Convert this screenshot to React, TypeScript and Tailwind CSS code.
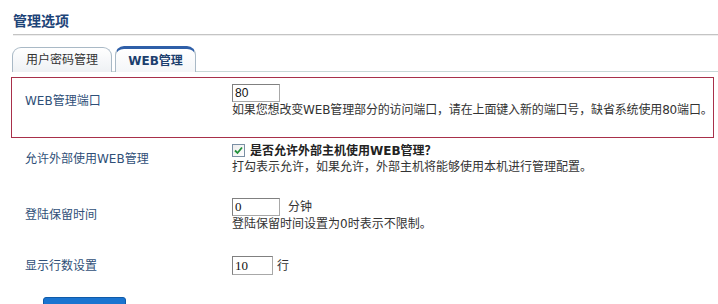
import React from "react";

const font = { fontFamily: '"DejaVu Sans", "Noto Sans CJK SC", sans-serif' };

export default function App() {
  return (
    <div className="w-[718px] h-[304px] overflow-hidden bg-white relative" style={font}>
      <div className="pl-[13px] pt-[9px] h-[34px]">
        <span className="text-[14px] font-bold text-[#1d4478] leading-[18px]">管理选项</span>
      </div>
      <div className="ml-[13px] h-[2px] bg-[#c4c4c4] border-b border-[#eeeeee]" />
      <div className="mt-[9px] ml-[12px] flex items-end gap-[3px] border-b border-[#c8d8d8] h-[27px]">
        <div className="w-[100px] h-[25px] -mb-px rounded-t-[9px] border border-[#a9b9c6] border-b-0 bg-gradient-to-b from-white to-[#eef1f4] flex items-center justify-center text-[12px] text-[#333]">
          用户密码管理
        </div>
        <div className="w-[81px] h-[26px] -mb-px rounded-t-[9px] border border-[#a9b9c6] border-t-[3px] border-t-[#2f5fa8] border-b-0 bg-gradient-to-b from-white to-[#f4f6f8] flex items-center justify-center text-[12px] font-bold text-[#1c3f6e]">
          WEB管理
        </div>
      </div>
      <div className="mt-[5px] ml-[11px] w-[703px] border border-[#a8304a] pt-[6px] pb-[19px]">
        <div className="flex items-center">
          <div className="w-[220px] shrink-0 pl-[13px] text-[12px] text-[#2f4f78]">WEB管理端口</div>
          <div className="flex flex-col text-[12px] text-[#333]">
            <div className="w-[48px] h-[18px] border border-[#a8a8a8] border-t-[#808080] border-l-[#808080] px-[2px] text-[12px] leading-[16px] text-[#111]" style={{ fontFamily: '"Liberation Sans", sans-serif' }}>80</div>
            <div className="leading-[16px] whitespace-nowrap tracking-[-0.15px]">如果您想改变WEB管理部分的访问端口，请在上面键入新的端口号，缺省系统使用80端口。</div>
          </div>
        </div>
      </div>
      <div className="ml-[12px] mt-[4px] flex items-center">
        <div className="w-[220px] shrink-0 pl-[13px] text-[12px] text-[#2f4f78]">允许外部使用WEB管理</div>
        <div className="flex flex-col text-[12px] text-[#333]">
          <div className="flex items-center h-[17px]">
            <div className="w-[13px] h-[13px] border border-[#7a8fa4] bg-gradient-to-br from-[#ececec] to-white flex items-center justify-center">
              <svg width="9" height="9" viewBox="0 0 9 9"><path d="M1 4.5 L3.5 7 L8 1.5" stroke="#22913a" strokeWidth="1.8" fill="none" /></svg>
            </div>
            <span className="ml-[5px] font-bold text-[#222]">是否允许外部主机使用WEB管理？</span>
          </div>
          <div className="leading-[16px]">打勾表示允许，如果允许，外部主机将能够使用本机进行管理配置。</div>
        </div>
      </div>
      <div className="ml-[12px] mt-[23px] flex items-center">
        <div className="w-[220px] shrink-0 pl-[13px] text-[12px] text-[#2f4f78]">登陆保留时间</div>
        <div className="flex flex-col text-[12px] text-[#333]">
          <div className="flex items-center">
            <div className="w-[48px] h-[18px] border border-[#a8a8a8] border-t-[#808080] border-l-[#808080] px-[2px] text-[13px] leading-[16px] text-[#111]" style={{ fontFamily: '"Liberation Serif", serif' }}>0</div>
            <span className="ml-[8px]">分钟</span>
          </div>
          <div className="leading-[16px]">登陆保留时间设置为0时表示不限制。</div>
        </div>
      </div>
      <div className="ml-[12px] mt-[24px] flex items-center">
        <div className="w-[220px] shrink-0 pl-[13px] text-[12px] text-[#2f4f78]">显示行数设置</div>
        <div className="flex items-center text-[12px] text-[#333]">
          <div className="w-[41px] h-[19px] border border-[#a8a8a8] border-t-[#808080] border-l-[#808080] px-[2px] text-[13px] leading-[17px] text-[#111]" style={{ fontFamily: '"Liberation Serif", serif' }}>10</div>
          <span className="ml-[4px]">行</span>
        </div>
      </div>
      <div className="ml-[43px] mt-[22px] w-[83px] h-[20px] rounded-t-[3px] bg-[#1a74d0] border border-[#0f5aa8]" />
    </div>
  );
}
